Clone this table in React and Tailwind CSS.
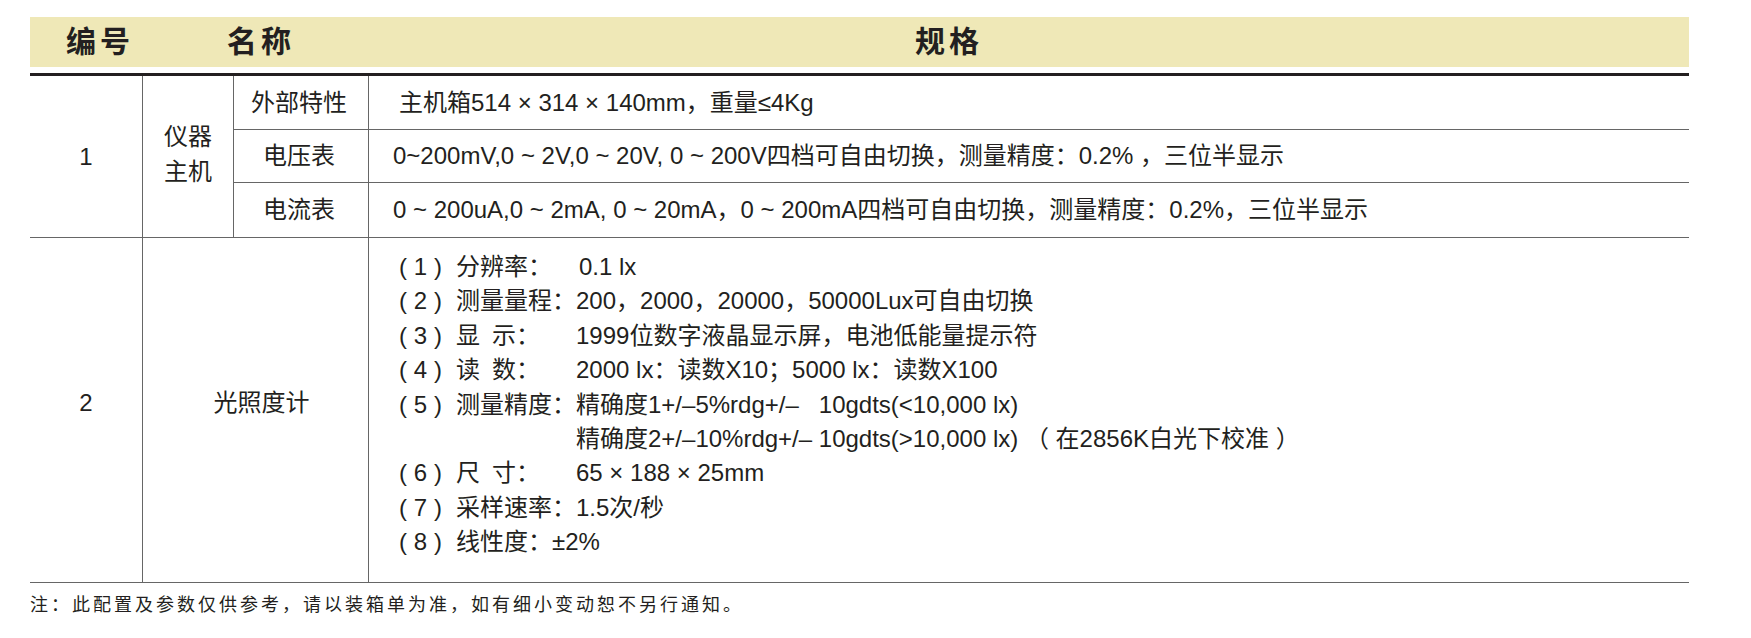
import React from 'react';

const specs = [
  { no: '1', label: '分辨率：', value: '0.1 lx', indent: 'pl-[3px]' },
  { no: '2', label: '测量量程：', value: '200，2000，20000，50000Lux可自由切换' },
  { no: '3', label: '显\u2002示：', value: '1999位数字液晶显示屏，电池低能量提示符' },
  { no: '4', label: '读\u2002数：', value: '2000 lx：读数X10；5000 lx：读数X100' },
  { no: '5', label: '测量精度：', value: '精确度1+/–5%rdg+/–   10gdts(<10,000 lx)' },
  { no: '', label: '', value: '精确度2+/–10%rdg+/– 10gdts(>10,000 lx) （ 在2856K白光下校准 ）' },
  { no: '6', label: '尺\u2002寸：', value: '65 × 188 × 25mm' },
  { no: '7', label: '采样速率：', value: '1.5次/秒' },
  { no: '8', label: '线性度：', value: '±2%', inline: true },
];

const hostRows = [
  { name: '外部特性', spec: '主机箱514 × 314 × 140mm，重量≤4Kg', pad: 'pl-[30px]', h: 'h-[54px] border-b' },
  { name: '电压表', spec: '0~200mV,0 ~ 2V,0 ~ 20V, 0 ~ 200V四档可自由切换，测量精度：0.2% ，三位半显示', pad: 'pl-[24px]', h: 'h-[53px] border-b' },
  { name: '电流表', spec: '0 ~ 200uA,0 ~ 2mA, 0 ~ 20mA，0 ~ 200mA四档可自由切换，测量精度：0.2%，三位半显示', pad: 'pl-[24px]', h: 'h-[54px]' },
];

export default function App() {
  return (
    <div className="w-[1751px] h-[638px] bg-white pt-[17px] pl-[30px] text-[#231f20] font-['Liberation_Sans','Noto_Sans_CJK_SC',sans-serif]">
      <div className="w-[1659px]">
        {/* header */}
        <div className="h-[50px] bg-[#efe8b7] flex items-center text-[30px] font-bold tracking-[4px] leading-none">
          <div className="w-[113px] pl-[36px]">编号</div>
          <div className="w-[226px] pl-[84px]">名称</div>
          <div className="flex-1 pl-[546px]">规格</div>
        </div>
        <div className="mt-[6px] h-[3px] bg-[#231f20]" />

        {/* instrument host */}
        <div className="flex border-b border-[#666] text-[24px]">
          <div className="w-[113px] border-r border-[#666] flex items-center justify-center">1</div>
          <div className="w-[91px] border-r border-[#666] flex items-center justify-center pb-[6px] leading-[35px] text-center">
            仪器<br />主机
          </div>
          <div className="flex-1 flex flex-col">
            {hostRows.map(row => (
              <div key={row.name} className={`flex border-[#666] ${row.h}`}>
                <div className="w-[135px] border-r border-[#666] flex items-center justify-center pr-[4px]">{row.name}</div>
                <div className={`flex-1 flex items-center whitespace-pre ${row.pad}`}>{row.spec}</div>
              </div>
            ))}
          </div>
        </div>

        {/* light meter */}
        <div className="flex h-[345px] border-b border-[#666] text-[24px]">
          <div className="w-[113px] border-r border-[#666] flex items-center justify-center pb-[14px]">2</div>
          <div className="w-[226px] border-r border-[#666] flex items-center justify-center pl-[12px] pb-[14px]">光照度计</div>
          <div className="flex-1 pl-[30px] pt-[12px] leading-[34.4px]">
            {specs.map((s, i) => (
              <div key={i} className="flex whitespace-pre">
                <div className="w-[57px]">
                  {s.no && (
                    <div className="w-[43px] flex justify-between">
                      <span>(</span>
                      <span>{s.no}</span>
                      <span>)</span>
                    </div>
                  )}
                </div>
                <div className={s.inline ? '' : 'w-[120px]'}>{s.label}</div>
                <div className={s.indent || ''}>{s.value}</div>
              </div>
            ))}
          </div>
        </div>

        <p className="mt-[8px] text-[18px] tracking-[3px] leading-[28px]">
          注：此配置及参数仅供参考，请以装箱单为准，如有细小变动恕不另行通知。
        </p>
      </div>
    </div>
  );
}
